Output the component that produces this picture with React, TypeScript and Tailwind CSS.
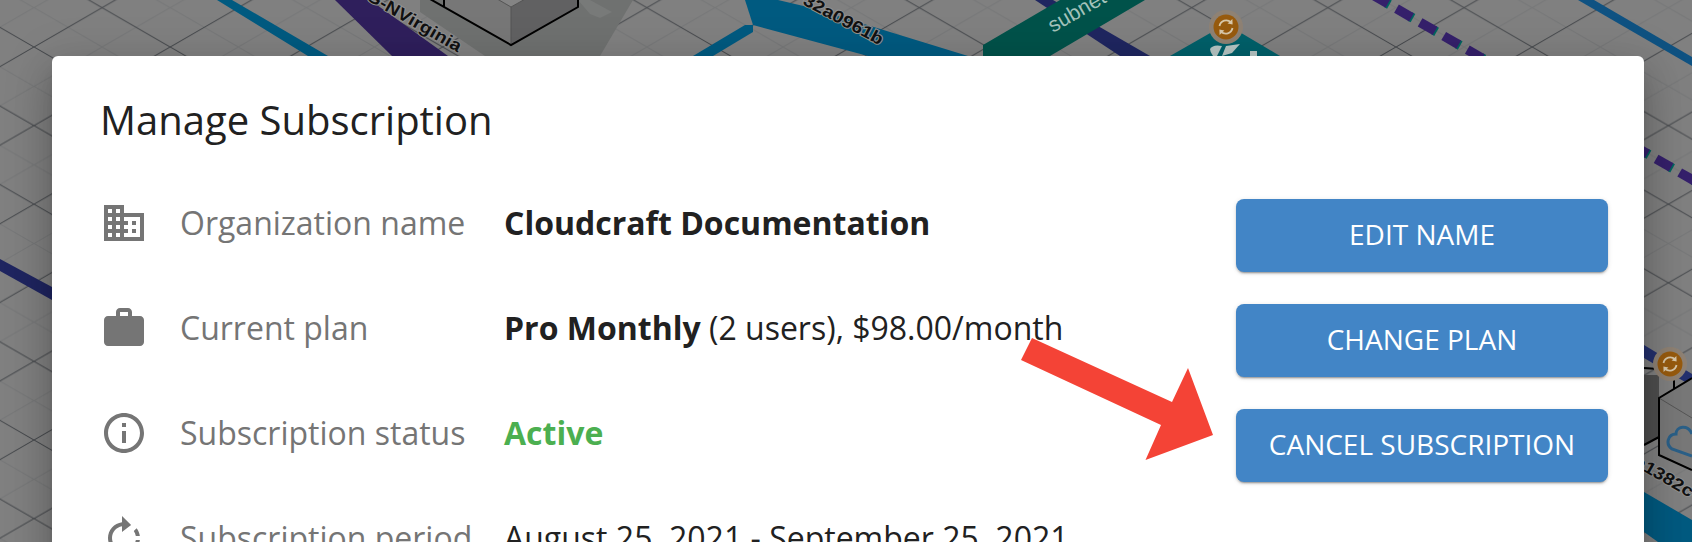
import React from "react";

const MAJOR = "#43464a";
const MINOR = "#767778";

function Dashes() {
  const items = [];
  for (let n = -2; n <= 13; n++) {
    const cx = 1404 + n * 23.6;
    const cy = 13 + n * 13.65;
    items.push(
      <g key={n}>
        <line x1={cx + 6} y1={cy + 3.5} x2={cx + 9} y2={cy + 5.2} stroke="#00665f" strokeWidth="9.5" />
        <line x1={cx - 7.5} y1={cy - 4.3} x2={cx + 7.5} y2={cy + 4.3} stroke="#35206b" strokeWidth="9.5" />
      </g>
    );
  }
  return <>{items}</>;
}

function Badge({ cx, cy }: { cx: number; cy: number }) {
  return (
    <g transform={`translate(${cx} ${cy})`}>
      <circle r="17" fill="#8f8274" />
      <circle r="12.5" fill="#985b0e" />
      <path d="M-6.5 -1 A6.8 6.8 0 0 1 5 -4.6" fill="none" stroke="#d8c8aa" strokeWidth="1.8" />
      <path d="M6.5 1 A6.8 6.8 0 0 1 -5 4.6" fill="none" stroke="#d8c8aa" strokeWidth="1.8" />
      <path d="M6.4 -8 L6.6 -2.6 L1.6 -3.4 Z" fill="#d8c8aa" />
      <path d="M-6.4 8 L-6.6 2.6 L-1.6 3.4 Z" fill="#d8c8aa" />
    </g>
  );
}

function Scene() {
  const label = "text-[17px] font-bold font-['Liberation_Sans',sans-serif] [paint-order:stroke]";
  return (
    <svg className="absolute inset-0" width="1692" height="542" viewBox="0 0 1692 542">
      <defs>
        <pattern id="grid" x="34" y="47" width="136.2" height="78.6" patternUnits="userSpaceOnUse">
          <rect width="136.2" height="78.6" fill="#808080" />
          <path d="M0 39.3L68.1 78.6M68.1 0L136.2 39.3M0 39.3L68.1 0M68.1 78.6L136.2 39.3" stroke={MINOR} strokeWidth="1" fill="none" />
          <path d="M0 0L136.2 78.6M0 78.6L136.2 0" stroke={MAJOR} strokeWidth="1" fill="none" />
        </pattern>
      </defs>
      <rect width="1692" height="542" fill="url(#grid)" />

      {/* left */}
      <polygon points="0,259 0,271 52,300 52,287" fill="#1f2560" />
      <polygon points="217,0 232,0 328,56 308,56" fill="#005a80" />
      <polygon points="335,0 370,0 448,56 392,56" fill="#2f1f5c" />
      <text transform="translate(365 -1) rotate(30) scale(1.15 1)" fill="#111" stroke="#8f8f8f" strokeWidth="2" className={label}>G-NVirginia</text>

      {/* box and shadow */}
      <polygon points="420,12 485,56 600,56 633,0 420,0" fill="#6f7170" />
      <polygon points="578,0 590,0 612,12 600,18 590,14" fill="#787a79" />
      <polygon points="511,7 444,-31 444,7 511,45" fill="#777777" />
      <polygon points="511,7 578,-31 578,7 511,45" fill="#616162" />
      <polygon points="511,7 578,-31 511,-70 444,-31" fill="#848484" />
      <path d="M511 7V45M511 7L468 -18M511 7L550 -15" stroke="#555" strokeWidth="1" fill="none" />
      <path d="M430 -1L511 45L578 7V-2M444 0V7" stroke="#000" strokeWidth="2" fill="none" />

      {/* blue branch */}
      <polygon points="745,25 753,25 753,32 713,56 693,56" fill="#005a80" />
      <polygon points="745,0 778,0 812,8 968,56 868,56 753,25" fill="#005a80" />
      <text transform="translate(802 4) rotate(28) scale(1.15 1)" fill="#111" stroke="#8f8f8f" strokeWidth="2" className={label}>32a0961b</text>

      {/* subnet */}
      <polygon points="1035,0 1053,0 1150,56 1120,56" fill="#1f2660" />
      <polygon points="983,45 1060,0 1145,0 1050,56 983,56" fill="#00524a" />
      <text x="1053" y="33" transform="rotate(-30 1053 33)" fill="#a3c2bb" className="text-[21px] font-['Liberation_Sans',sans-serif]">subnet</text>

      {/* teal node */}
      <polygon points="1170,56 1226,24 1280,56" fill="#00606a" />
      <path d="M1210 49Q1213 44 1222 46L1217 56H1213Q1210 52 1210 49Z" fill="#b7c6c4" />
      <path d="M1226 46L1240 44L1232 53L1222 56Z" fill="#b7c6c4" />
      <rect x="1250" y="51" width="7" height="5" fill="#b7c6c4" />
      <Badge cx={1226} cy={27} />

      <Dashes />
      <polygon points="1578,0 1594,0 1692,57 1692,66" fill="#0f5282" />

      {/* right lower node */}
      <polygon points="1644,345 1644,358 1692,386 1692,374" fill="#24306e" />
      <polygon points="1644,375 1659,375 1659,437 1644,445" fill="#4f4f4f" />
      <path d="M1644 368L1658 369M1674 376V390" stroke="#000" strokeWidth="2" />
      <polygon points="1659,398 1692,378 1692,470 1659,455" fill="#787878" />
      <path d="M1659 398L1692 418" stroke="#555" strokeWidth="1" />
      <path d="M1692 378L1659 398V455L1692 470M1644 445L1659 437" stroke="#000" strokeWidth="2" fill="none" />
      <path d="M1692 434C1688 424 1676 426 1676 434C1668 434 1665 444 1672 449L1692 456" stroke="#2b6088" strokeWidth="3" fill="none" />
      <Badge cx={1670} cy={364} />
      <text transform="translate(1633 465) rotate(30) scale(1.15 1)" fill="#111" stroke="#8f8f8f" strokeWidth="2" className={label}>a1382c</text>
      <polygon points="1644,492 1692,520 1692,542 1658,542 1644,532" fill="#005a80" />
    </svg>
  );
}

const Row = ({ icon, label, children }: { icon: string; label: string; children: React.ReactNode }) => (
  <div className="flex h-12 items-center">
    <svg viewBox="0 0 24 24" className="h-12 w-12 shrink-0 fill-[#757575]">
      <path d={icon} />
    </svg>
    <div className="ml-8 w-[324px] shrink-0 text-[#757575]">{label}</div>
    <div className="whitespace-nowrap text-[#212121]">{children}</div>
  </div>
);

const Btn = ({ children }: { children: React.ReactNode }) => (
  <div className="flex h-[73px] w-[372px] items-center justify-center rounded-lg bg-[#4285c6] pb-1 text-[28px] text-white shadow-[0_2px_2px_0_rgba(0,0,0,0.14),0_3px_1px_-2px_rgba(0,0,0,0.2),0_1px_5px_0_rgba(0,0,0,0.12)]">
    {children}
  </div>
);

export default function App() {
  return (
    <div className="relative h-[542px] w-[1692px] overflow-hidden pl-[52px] pr-[48px] pt-[56px] font-['Open_Sans',sans-serif]">
      <Scene />
      <div className="relative h-[600px] rounded-md bg-white pl-12 pr-9 pt-[40px] shadow-[0_24px_38px_3px_rgba(0,0,0,0.14),0_9px_46px_8px_rgba(0,0,0,0.12),0_11px_15px_-7px_rgba(0,0,0,0.2)]">
        <h1 className="h-12 text-[40px] leading-[48px] text-[#212121]">Manage Subscription</h1>
        <div className="mt-[55px] flex justify-between">
          <div className="flex flex-col gap-[57px] text-[32px]">
            <Row
              label="Organization name"
              icon="M12 7V3H2v18h20V7H12zM6 19H4v-2h2v2zm0-4H4v-2h2v2zm0-4H4V9h2v2zm0-4H4V5h2v2zm4 12H8v-2h2v2zm0-4H8v-2h2v2zm0-4H8V9h2v2zm0-4H8V5h2v2zm10 12h-8v-2h2v-2h-2v-2h2v-2h-2V9h8v10zm-2-8h-2v2h2v-2zm0 4h-2v2h2v-2z"
            >
              <b className="font-bold">Cloudcraft Documentation</b>
            </Row>
            <Row
              label="Current plan"
              icon="M20 6h-4V4c0-1.11-.89-2-2-2h-4c-1.11 0-2 .89-2 2v2H4c-1.11 0-1.99.89-1.99 2L2 19c0 1.11.89 2 2 2h16c1.11 0 2-.89 2-2V8c0-1.11-.89-2-2-2zm-6 0h-4V4h4v2z"
            >
              <b className="font-bold">Pro Monthly</b> (2 users), $98.00/month
            </Row>
            <Row
              label="Subscription status"
              icon="M11 17h2v-6h-2v6zm1-15C6.48 2 2 6.48 2 12s4.48 10 10 10 10-4.48 10-10S17.52 2 12 2zm0 18c-4.41 0-8-3.59-8-8s3.59-8 8-8 8 3.59 8 8-3.59 8-8 8zM11 9h2V7h-2v2z"
            >
              <b className="font-bold text-[#4caf50]">Active</b>
            </Row>
            <Row
              label="Subscription period"
              icon="M15.55 5.55L11 1v3.07C7.06 4.56 4 7.92 4 12s3.05 7.44 7 7.93v-2.02c-2.84-.48-5-2.94-5-5.91s2.16-5.43 5-5.91V9l4.55-3.45zM19.93 11c-.17-1.39-.72-2.73-1.62-3.89l-1.42 1.42c.54.75.88 1.6 1.02 2.47h2.02zM13 17.9v2.02c1.39-.17 2.74-.71 3.9-1.61l-1.44-1.44c-.75.54-1.59.89-2.46 1.03zm3.89-2.42l1.42 1.41c.9-1.16 1.45-2.5 1.62-3.89h-2.02c-.14.87-.48 1.72-1.02 2.48z"
            >
              August 25, 2021 - September 25, 2021
            </Row>
          </div>
          <div className="flex flex-col gap-8">
            <Btn>EDIT NAME</Btn>
            <Btn>CHANGE PLAN</Btn>
            <Btn>CANCEL SUBSCRIPTION</Btn>
          </div>
        </div>
      </div>
      <svg className="absolute left-[1015px] top-[330px]" width="205" height="135" viewBox="1015 330 205 135">
        <polygon points="1032,338 1021,360 1161,425 1145.5,460 1213,435 1188,368 1172,402" fill="#f44336" />
      </svg>
    </div>
  );
}
